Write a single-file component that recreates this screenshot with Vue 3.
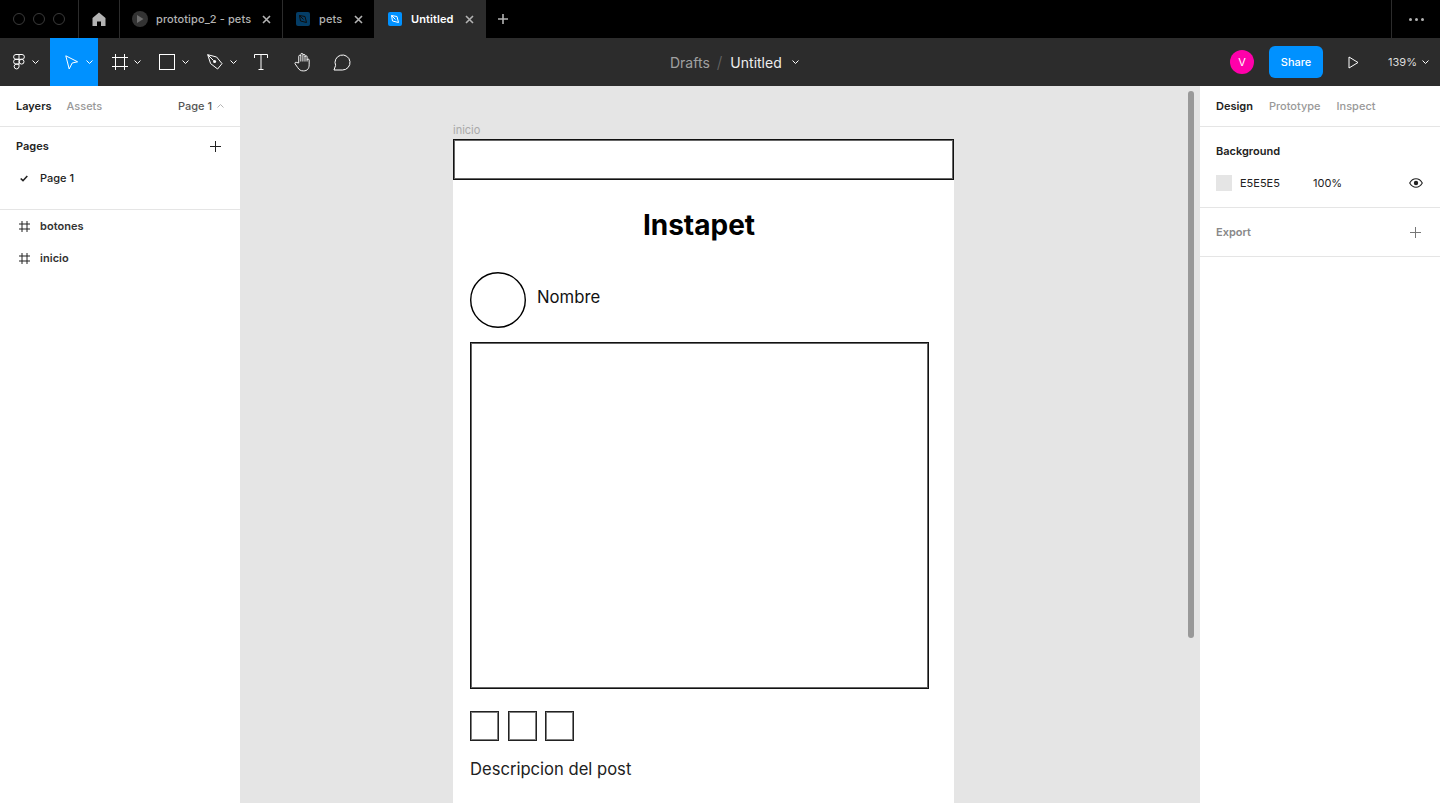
<template>
  <div class="app">
    <!-- tab bar -->
    <div class="tabbar">
      <div class="dots"><i></i><i></i><i></i></div>
      <div class="home">
        <svg width="14" height="14" viewBox="0 0 14 14"><path d="M7 0.5 L13.5 6 V14 H9 V9.5 H5 V14 H0.5 V6 Z" fill="#b3b3b3" /></svg>
      </div>
      <div class="tab tab-proto">
        <span class="play-badge"><svg width="8" height="8" viewBox="0 0 8 8"><path d="M1 0 L7.5 4 L1 8 Z" fill="#6e6e6e" /></svg></span>
        <span class="tab-name">prototipo_2 - pets</span>
        <svg class="close" width="9" height="9" viewBox="0 0 9 9"><path d="M1 1 L8 8 M8 1 L1 8" stroke="#b3b3b3" stroke-width="1.6" /></svg>
      </div>
      <div class="tab tab-pets">
        <span class="file-badge dim">
          <svg width="10" height="10" viewBox="0 0 10 10"><path d="M1.5 1.5 L7 2.5 L8.5 8.5 L2.5 7 Z M1.5 1.5 L5.5 5.5" fill="none" stroke="#0d0d0d" stroke-width="1" /></svg>
        </span>
        <span class="tab-name">pets</span>
        <svg class="close" width="9" height="9" viewBox="0 0 9 9"><path d="M1 1 L8 8 M8 1 L1 8" stroke="#b3b3b3" stroke-width="1.6" /></svg>
      </div>
      <div class="tab tab-active">
        <span class="file-badge">
          <svg width="10" height="10" viewBox="0 0 10 10"><path d="M1.5 1.5 L7 2.5 L8.5 8.5 L2.5 7 Z M1.5 1.5 L5.5 5.5" fill="none" stroke="#fff" stroke-width="1" /></svg>
        </span>
        <span class="tab-name">Untitled</span>
        <svg class="close" width="9" height="9" viewBox="0 0 9 9"><path d="M1 1 L8 8 M8 1 L1 8" stroke="#b3b3b3" stroke-width="1.6" /></svg>
      </div>
      <div class="newtab">
        <svg width="10" height="10" viewBox="0 0 10 10"><path d="M5 0 V10 M0 5 H10" stroke="#b3b3b3" stroke-width="1.6" /></svg>
      </div>
      <div class="more"><i></i><i></i><i></i></div>
    </div>

    <!-- toolbar -->
    <div class="toolbar">
      <div class="tools">
        <div class="tool tool-logo">
          <svg width="12" height="16" viewBox="0 0 12 16" fill="none" stroke="#fff" stroke-width="1"><path d="M6 .5 H3 A2.4 2.4 0 0 0 3 5.3 H6 Z M6 .5 H9 A2.4 2.4 0 0 1 9 5.3 H6 M6 5.3 H3 A2.4 2.4 0 0 0 3 10.1 H6 Z M6 10.1 H3 A2.45 2.45 0 1 0 6 12.9 Z" /><circle cx="8.6" cy="7.7" r="2.4" /></svg>
          <svg class="chev" width="7" height="4" viewBox="0 0 7 4"><path d="M.5 .5 L3.5 3.5 L6.5 .5" fill="none" stroke="#fff" /></svg>
        </div>
        <div class="tool tool-move">
          <svg width="14" height="15" viewBox="0 0 14 15"><path d="M.8 .8 L12.6 6.8 L7.2 8 L4.2 14 Z" fill="none" stroke="#fff" /></svg>
          <svg class="chev" width="7" height="4" viewBox="0 0 7 4"><path d="M.5 .5 L3.5 3.5 L6.5 .5" fill="none" stroke="#fff" /></svg>
        </div>
        <div class="tool tool-frame">
          <svg width="16" height="16" viewBox="0 0 16 16"><path d="M3.5 0 V16 M12.5 0 V16 M0 3.5 H16 M0 12.5 H16" fill="none" stroke="#fff" /></svg>
          <svg class="chev" width="7" height="4" viewBox="0 0 7 4"><path d="M.5 .5 L3.5 3.5 L6.5 .5" fill="none" stroke="#fff" /></svg>
        </div>
        <div class="tool tool-rect">
          <svg width="16" height="16" viewBox="0 0 16 16"><rect x=".5" y=".5" width="15" height="15" fill="none" stroke="#fff" /></svg>
          <svg class="chev" width="7" height="4" viewBox="0 0 7 4"><path d="M.5 .5 L3.5 3.5 L6.5 .5" fill="none" stroke="#fff" /></svg>
        </div>
        <div class="tool tool-pen">
          <svg width="16" height="16" viewBox="0 0 16 16" fill="none" stroke="#fff"><path d="M.7 .7 L9.6 3 L15 9.6 L10.6 15 L3.6 9.6 Z" /><circle cx="7.6" cy="7.6" r="1.5" fill="#fff" stroke="none" /><path d="M.7 .7 L6.6 6.6" /></svg>
          <svg class="chev" width="7" height="4" viewBox="0 0 7 4"><path d="M.5 .5 L3.5 3.5 L6.5 .5" fill="none" stroke="#fff" /></svg>
        </div>
        <div class="tool tool-text">
          <svg width="14" height="16" viewBox="0 0 14 16"><path d="M.5 4 V.5 H13.5 V4 M7 .5 V15.5 M4.5 15.5 H9.5" fill="none" stroke="#fff" /></svg>
        </div>
        <div class="tool tool-hand">
          <svg width="18" height="20" viewBox="0 0 19 20" fill="none" stroke="#fff"><path d="M5 11 V4 A1.1 1.1 0 0 1 7.2 4 V2 A1.1 1.1 0 0 1 9.4 2 V3 A1.1 1.1 0 0 1 11.6 3 V4.5 A1.1 1.1 0 0 1 13.8 4.5 V8 A1.1 1.1 0 0 1 16 8 V13 C16 17 14 19.4 10 19.4 C7 19.4 5.6 18.4 4 16 L1.2 12 C.4 10.8 2 9.6 3 10.6 Z M7.2 4 V9.5 M9.4 3 V9.5 M11.6 4 V9.5 M13.8 8 V9.5" /></svg>
        </div>
        <div class="tool tool-comment">
          <svg width="18" height="18" viewBox="0 0 18 18" fill="none" stroke="#fff"><path d="M1 17 H9.5 A7.5 7.5 0 1 0 2.6 12.4 Z" /></svg>
        </div>
      </div>
      <div class="crumbs">
        <span class="muted">Drafts</span>
        <span class="slash">/</span>
        <span class="doc">Untitled</span>
        <svg class="chev" width="7" height="4" viewBox="0 0 7 4"><path d="M.5 .5 L3.5 3.5 L6.5 .5" fill="none" stroke="#fff" /></svg>
      </div>
      <div class="actions">
        <span class="avatar">V</span>
        <button class="share">Share</button>
        <svg class="present" width="11" height="13" viewBox="0 0 11 13"><path d="M1 1 L10 6.5 L1 12 Z" fill="none" stroke="#fff" /></svg>
        <span class="zoom">139%</span>
        <svg class="chev" width="7" height="4" viewBox="0 0 7 4"><path d="M.5 .5 L3.5 3.5 L6.5 .5" fill="none" stroke="#fff" /></svg>
      </div>
    </div>

    <div class="workspace">
      <!-- layers panel -->
      <aside class="left">
        <div class="panel-tabs ltabs">
          <span class="on">Layers</span>
          <span class="off">Assets</span>
          <span class="page-pick">Page 1
            <svg width="7" height="4" viewBox="0 0 7 4"><path d="M.5 3.5 L3.5 .5 L6.5 3.5" fill="none" stroke="#b3b3b3" /></svg>
          </span>
        </div>
        <div class="pages">
          <div class="pages-head">
            <span>Pages</span>
            <svg width="11" height="11" viewBox="0 0 11 11"><path d="M5.5 0 V11 M0 5.5 H11" stroke="#222" /></svg>
          </div>
          <div class="page-row">
            <svg width="8" height="7" viewBox="0 0 8 7"><path d="M.7 3.5 L3 5.7 L7.3 1" fill="none" stroke="#222" stroke-width="1.6" /></svg>
            <span>Page 1</span>
          </div>
        </div>
        <div class="layers">
          <div class="layer" v-for="l in layers" :key="l">
            <svg width="11" height="11" viewBox="0 0 11 11"><path d="M3 0 V11 M8 0 V11 M0 3 H11 M0 8 H11" fill="none" stroke="#222" /></svg>
            <span>{{ l }}</span>
          </div>
        </div>
      </aside>

      <!-- canvas -->
      <main class="canvas">
        <div class="frame">
          <div class="frame-label">inicio</div>
          <div class="frame-body">
            <div class="topbox"></div>
            <h1>Instapet</h1>
            <div class="user">
              <svg class="circle" width="56" height="56" viewBox="0 0 56 56"><circle cx="28" cy="28" r="27.3" fill="none" stroke="#000" stroke-width="1.4" /></svg>
              <span>Nombre</span>
            </div>
            <div class="photo"></div>
            <div class="squares"><i></i><i></i><i></i></div>
            <p class="desc">Descripcion del post</p>
          </div>
        </div>
        <div class="scroll"></div>
      </main>

      <!-- design panel -->
      <aside class="right">
        <div class="panel-tabs">
          <span class="on">Design</span>
          <span class="off">Prototype</span>
          <span class="off">Inspect</span>
        </div>
        <div class="bg-sec">
          <div class="sec-title">Background</div>
          <div class="bg-row">
            <span class="swatch"></span>
            <span class="hex">E5E5E5</span>
            <span class="pct">100%</span>
            <svg width="14" height="10" viewBox="0 0 14 10"><path d="M.7 5 C2.4 2 4.5 .8 7 .8 S11.6 2 13.3 5 C11.6 8 9.5 9.2 7 9.2 S2.4 8 .7 5 Z" fill="none" stroke="#222" stroke-width="1.1" /><circle cx="7" cy="5" r="2.2" fill="#222" /></svg>
          </div>
        </div>
        <div class="export">
          <span>Export</span>
          <svg width="11" height="11" viewBox="0 0 11 11"><path d="M5.5 0 V11 M0 5.5 H11" stroke="#777" /></svg>
        </div>
      </aside>
    </div>
  </div>
</template>

<script setup>
const layers = ['botones', 'inicio']
</script>

<style>
html, body {
  margin: 0;
  overflow: hidden;
}
</style>

<style scoped>
.app {
  width: 1440px;
  height: 803px;
  display: flex;
  flex-direction: column;
  overflow: hidden;
  font-family: Inter, "Liberation Sans", sans-serif;
  font-size: 11px;
  color: #222;
}

.tabbar {
  height: 38px;
  background: #000;
  display: flex;
  flex-shrink: 0;
  color: #b3b3b3;
  font-weight: 500;
}
.dots {
  width: 79px;
  display: flex;
  align-items: center;
  gap: 8px;
  padding-left: 13px;
  box-sizing: border-box;
  border-right: 1px solid #2c2c2c;
}
.dots i {
  width: 10px;
  height: 10px;
  border: 1px solid #3a3a3a;
  border-radius: 50%;
}
.home {
  width: 41px;
  display: flex;
  align-items: center;
  justify-content: center;
  box-sizing: border-box;
  border-right: 1px solid #2c2c2c;
}
.tab {
  display: flex;
  align-items: center;
  box-sizing: border-box;
}
.tab-proto { width: 163px; padding-left: 12px; border-right: 1px solid #2c2c2c; }
.tab-pets { width: 91px; padding-left: 13px; }
.tab-active { width: 112px; padding-left: 14px; background: #2c2c2c; color: #fff; font-weight: 600; }
.tab-name { margin-left: 9px; flex: 1; letter-spacing: .1px; }
.tab-proto .tab-name { margin-left: 8px; }
.close { margin-right: 11px; }
.tab-active .close { margin-right: 12px; }
.play-badge {
  width: 16px;
  height: 16px;
  border-radius: 50%;
  background: #333;
  display: flex;
  align-items: center;
  justify-content: center;
}
.file-badge {
  width: 14px;
  height: 14px;
  border-radius: 2px;
  background: #0091ff;
  display: flex;
  align-items: center;
  justify-content: center;
}
.file-badge.dim { background: #043d66; }
.newtab {
  width: 34px;
  display: flex;
  align-items: center;
  justify-content: center;
}
.more {
  margin-left: auto;
  width: 49px;
  box-sizing: border-box;
  border-left: 1px solid #2c2c2c;
  display: flex;
  align-items: center;
  justify-content: center;
  gap: 3px;
}
.more i {
  width: 3px;
  height: 3px;
  border-radius: 50%;
  background: #b3b3b3;
}

.toolbar {
  height: 48px;
  background: #2c2c2c;
  display: flex;
  flex-shrink: 0;
  align-items: center;
  position: relative;
  color: #fff;
}
.tools {
  display: flex;
  height: 100%;
}
.tool {
  height: 100%;
  display: flex;
  align-items: center;
  box-sizing: border-box;
  gap: 7px;
}
.tool-logo { width: 50px; padding-left: 13px; }
.tool-move { width: 48px; padding-left: 15px; background: #0091ff; }
.tool-frame { width: 48px; padding-left: 14px; gap: 6px; }
.tool-rect { width: 48px; padding-left: 13px; }
.tool-pen { width: 48px; padding-left: 13px; }
.tool-text { width: 36px; padding-left: 12px; }
.tool-hand { width: 44px; padding-left: 16px; }
.tool-comment { width: 36px; padding-left: 11px; }
.crumbs {
  position: absolute;
  left: 670px;
  top: 0;
  height: 100%;
  display: flex;
  align-items: center;
  font-size: 14px;
}
.muted { color: #a0a0a0; }
.slash { color: #666; margin: 0 8px 0 7px; font-weight: 300; font-size: 16px; }
.doc { color: #eee; margin-right: 10px; }
.actions {
  margin-left: auto;
  display: flex;
  align-items: center;
  padding-right: 11px;
}
.avatar {
  width: 24px;
  height: 24px;
  border-radius: 50%;
  background: #f0a;
  display: flex;
  align-items: center;
  justify-content: center;
  font-size: 11px;
}
.share {
  margin-left: 15px;
  width: 54px;
  height: 32px;
  border: 0;
  border-radius: 6px;
  background: #0091ff;
  color: #fff;
  font: 500 11px Inter, "Liberation Sans", sans-serif;
}
.present { margin-left: 25px; }
.zoom { margin-left: 29px; margin-right: 5px; color: #ddd; }

.workspace {
  flex: 1;
  display: flex;
  min-height: 0;
}
.left, .right {
  width: 240px;
  flex-shrink: 0;
  background: #fff;
}
.panel-tabs {
  height: 41px;
  box-sizing: border-box;
  display: flex;
  align-items: center;
  padding: 0 16px;
  gap: 16px;
  border-bottom: 1px solid #e5e5e5;
  font-weight: 500;
}
.ltabs { gap: 15px; }
.on { font-weight: 600; color: #222; }
.off { color: #999; }
.page-pick {
  margin-left: auto;
  display: flex;
  align-items: center;
  gap: 5px;
  color: #555;
}
.pages {
  height: 83px;
  box-sizing: border-box;
  border-bottom: 1px solid #e5e5e5;
}
.pages-head {
  height: 38px;
  display: flex;
  align-items: center;
  justify-content: space-between;
  padding: 0 19px 0 16px;
  font-weight: 600;
}
.page-row {
  height: 26px;
  display: flex;
  align-items: center;
  padding-left: 20px;
  gap: 12px;
  font-weight: 500;
}
.layer {
  height: 32px;
  display: flex;
  align-items: center;
  padding-left: 19px;
  gap: 10px;
  font-weight: 600;
  letter-spacing: .05px;
  color: #333;
}

.canvas {
  flex: 1;
  background: #e5e5e5;
  position: relative;
  overflow: hidden;
}
.frame {
  position: absolute;
  left: 213px;
  top: 37px;
  width: 501px;
}
.frame-label {
  font-size: 11px;
  line-height: 14px;
  margin-bottom: 2px;
  color: #aaa;
}
.frame-body {
  background: #fff;
  height: 800px;
}
.topbox {
  height: 41px;
  box-sizing: border-box;
  border: 1px solid #111;
  box-shadow: inset 0 0 0 1px rgba(0, 0, 0, .6);
}
h1 {
  margin: 27px 0 0;
  padding-right: 9px;
  text-align: center;
  font-size: 28px;
  line-height: 36px;
  font-weight: 700;
  color: #000;
}
.user {
  display: flex;
  align-items: flex-start;
  margin: 29px 0 0 17px;
  font-size: 16.7px;
  line-height: 22px;
  color: #111;
}
.user span { margin: 14px 0 0 11px; }
.circle { flex-shrink: 0; }
.photo {
  width: 459px;
  height: 347px;
  box-sizing: border-box;
  margin: 14px 0 0 17px;
  border: 1px solid #111;
  box-shadow: inset 0 0 0 1px rgba(0, 0, 0, .6);
}
.squares {
  display: flex;
  gap: 8.5px;
  margin: 22px 0 0 17px;
}
.squares i {
  width: 29px;
  height: 30px;
  box-sizing: border-box;
  border: 1px solid #222;
  box-shadow: inset 0 0 0 1px rgba(0, 0, 0, .5);
}
.desc {
  margin: 17px 0 0 17px;
  font-size: 16.6px;
  line-height: 22px;
  color: #222;
}
.scroll {
  position: absolute;
  right: 6px;
  top: 5px;
  width: 6px;
  height: 547px;
  border-radius: 3px;
  background: #999;
}

.bg-sec {
  height: 81px;
  box-sizing: border-box;
  border-bottom: 1px solid #e5e5e5;
  padding: 0 16px;
}
.sec-title {
  height: 48px;
  line-height: 48px;
  font-weight: 600;
}
.bg-row {
  display: flex;
  align-items: center;
  height: 16px;
}
.swatch {
  width: 16px;
  height: 16px;
  background: #e5e5e5;
}
.hex { margin-left: 8px; width: 73px; }
.pct { flex: 1; }
.bg-row svg { margin-right: 1px; }
.export {
  height: 49px;
  box-sizing: border-box;
  display: flex;
  align-items: center;
  justify-content: space-between;
  padding: 0 19px 0 16px;
  border-bottom: 1px solid #e5e5e5;
  font-weight: 600;
  color: #888;
}
</style>
